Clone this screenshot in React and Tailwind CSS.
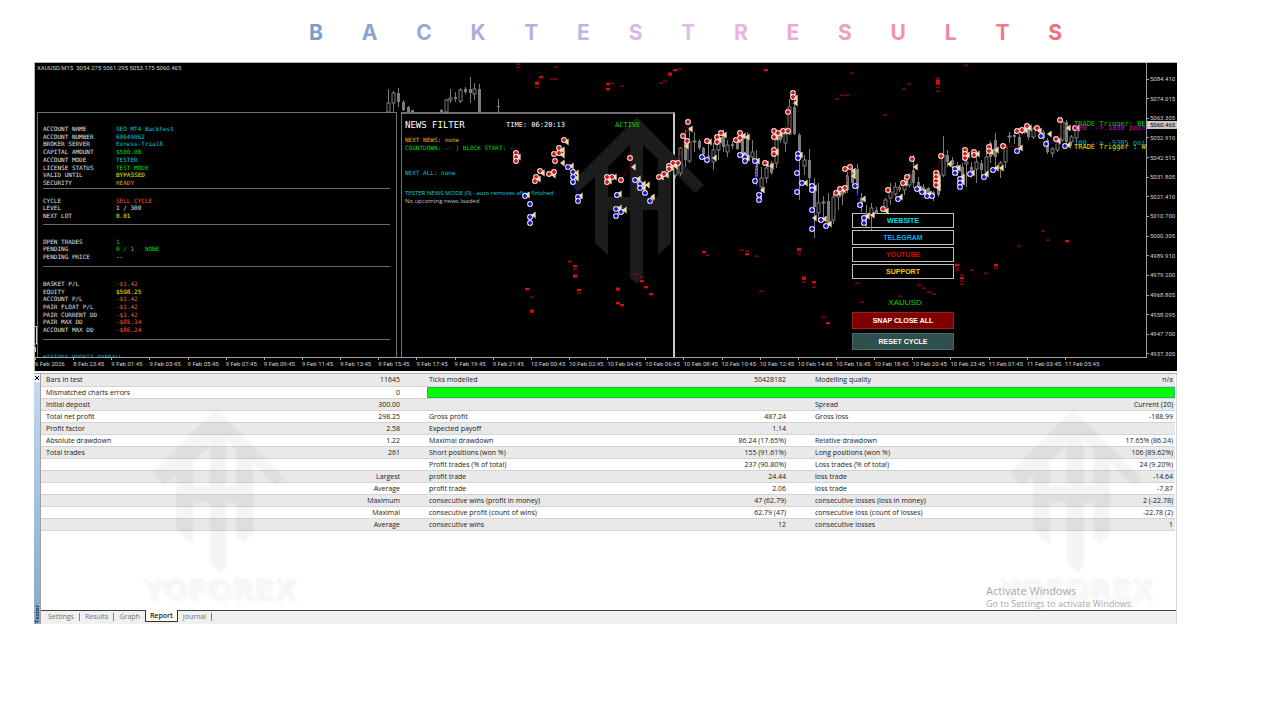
import React from "react";

const TITLE = [
  ["B", "text-[#7b9dcd]"], ["A", "text-[#8aa3d0]"], ["C", "text-[#9aa8d8]"],
  ["K", "text-[#a9aedc]"], ["T", "text-[#b5b0e0]"], ["E", "text-[#c4b4e6]"],
  ["S", "text-[#d6b7ec]"], ["T", "text-[#e3bbee]"], ["R", "text-[#e9b4e2]"],
  ["E", "text-[#eea9d3]"], ["S", "text-[#ef9fc0]"], ["U", "text-[#f092ae]"],
  ["L", "text-[#f0879f]"], ["T", "text-[#f2798d]"], ["S", "text-[#f26f80]"],
];

const PRICES = [
  "5084.410", "5074.015", "5063.305", "5052.910", "5042.515", "5031.805", "5021.410", "5010.700",
  "5000.305", "4989.910", "4979.200", "4968.805", "4958.095", "4947.700", "4937.305",
];

const TIMES = [
  "6 Feb 2026", "8 Feb 23:45", "9 Feb 01:45", "9 Feb 03:45", "9 Feb 05:45", "9 Feb 07:45", "9 Feb 09:45",
  "9 Feb 11:45", "9 Feb 13:45", "9 Feb 15:45", "9 Feb 17:45", "9 Feb 19:45", "9 Feb 21:45", "10 Feb 00:45",
  "10 Feb 02:45", "10 Feb 04:45", "10 Feb 06:45", "10 Feb 08:45", "10 Feb 10:45", "10 Feb 12:45",
  "10 Feb 14:45", "10 Feb 16:45", "10 Feb 18:45", "10 Feb 20:45", "10 Feb 23:45", "11 Feb 01:45",
  "11 Feb 03:45", "11 Feb 05:45",
];

const CYAN = "text-[#00c8d8]";
const GREEN = "text-[#00dc00]";
const YELLOW = "text-[#f0f000]";
const RED = "text-[#f05a3c]";
const WHITE = "text-[#e0e0e0]";

const ACCOUNT = [
  ["ACCOUNT NAME", "SEO MT4 Backtest", CYAN], ["ACCOUNT NUMBER", "69649962", CYAN],
  ["BROKER SERVER", "Exness-Trial8", CYAN], ["CAPITAL AMOUNT", "$500.00", GREEN],
  ["ACCOUNT MODE", "TESTER", CYAN], ["LICENSE STATUS", "TEST MODE", GREEN],
  ["VALID UNTIL", "BYPASSED", YELLOW], ["SECURITY", "READY", "text-[#e89a10]"],
];
const CYCLE = [["CYCLE", "SELL CYCLE", RED], ["LEVEL", "1 / 300", WHITE], ["NEXT LOT", "0.01", YELLOW]];
const TRADES = [["OPEN TRADES", "1", GREEN], ["PENDING", "0 / 1   NONE", GREEN], ["PENDING PRICE", "--", WHITE]];
const PROFIT = [
  ["BASKET P/L", "-$1.42", RED], ["EQUITY", "$598.25", YELLOW], ["ACCOUNT P/L", "-$1.42", RED],
  ["PAIR FLOAT P/L", "-$1.42", RED], ["PAIR CURRENT DD", "-$1.42", RED], ["PAIR MAX DD", "-$85.34", RED],
  ["ACCOUNT MAX DD", "-$86.24", RED],
];

// x, high, low, body top, body bottom, filled
const CANDLES = [
  [388, 89, 112, 103, 112, 0], [393, 91, 112, 93, 103, 0], [398, 88, 107, 93, 102, 1], [403, 100, 111, 102, 110, 1],
  [408, 106, 112, 107, 112, 1], [412, 110, 112, 110, 112, 1], [441, 109, 112, 110, 112, 1], [446, 99, 112, 100, 112, 0],
  [450, 89, 103, 98, 100, 0], [455, 92, 102, 97, 99, 1], [460, 88, 103, 90, 101, 0], [465, 87, 94, 89, 92, 1],
  [470, 77, 103, 89, 93, 1], [474, 83, 100, 89, 94, 0], [479, 84, 112, 89, 112, 1], [498, 99, 112, 106, 106, 1],
  [675, 160, 178, 163, 175, 0], [680, 147, 176, 148, 173, 0], [685, 130, 167, 142, 160, 1], [689, 127, 163, 142, 161, 0],
  [694, 132, 152, 141, 142, 0], [699, 139, 150, 141, 148, 1], [703, 147, 158, 148, 154, 1], [708, 140, 160, 156, 158, 1],
  [713, 143, 170, 150, 162, 0], [718, 135, 160, 142, 150, 0], [723, 130, 152, 135, 147, 1], [727, 140, 157, 145, 152, 0],
  [732, 141, 149, 144, 146, 1], [737, 138, 150, 142, 149, 1], [742, 132, 155, 137, 153, 1], [747, 132, 162, 138, 157, 1],
  [752, 140, 160, 152, 157, 0], [756, 150, 185, 160, 177, 1], [761, 167, 200, 178, 187, 0], [766, 163, 183, 168, 178, 0],
  [771, 161, 175, 163, 173, 1], [776, 135, 168, 140, 163, 0], [780, 130, 143, 133, 140, 1], [785, 127, 152, 134, 143, 0],
  [789, 99, 135, 107, 134, 0], [794, 92, 135, 107, 134, 1], [799, 133, 200, 135, 160, 1], [804, 155, 175, 160, 166, 0],
  [809, 149, 185, 160, 178, 1], [814, 178, 238, 187, 207, 1], [818, 183, 222, 203, 213, 0], [823, 196, 220, 202, 203, 0],
  [828, 193, 227, 201, 223, 1], [833, 195, 224, 197, 220, 0], [838, 188, 210, 190, 197, 0], [842, 186, 205, 188, 195, 1],
  [847, 172, 193, 175, 190, 1], [852, 167, 185, 170, 183, 1], [857, 164, 195, 169, 189, 1], [861, 193, 212, 198, 207, 1],
  [866, 205, 227, 213, 219, 1], [871, 203, 230, 208, 215, 0], [876, 207, 214, 210, 213, 1], [885, 198, 212, 200, 210, 0],
  [890, 183, 205, 192, 198, 0], [895, 182, 196, 187, 194, 0], [899, 185, 192, 187, 190, 1], [904, 178, 195, 185, 190, 0],
  [909, 173, 188, 175, 185, 0], [913, 155, 188, 170, 183, 1], [918, 177, 190, 182, 187, 1], [923, 184, 194, 187, 191, 1],
  [928, 187, 197, 188, 195, 1], [933, 191, 201, 192, 197, 1], [938, 170, 197, 172, 195, 1], [943, 136, 177, 155, 175, 0],
  [947, 150, 167, 155, 162, 1], [952, 157, 168, 160, 165, 1], [957, 162, 176, 165, 173, 1], [962, 163, 182, 167, 178, 1],
  [966, 157, 187, 162, 164, 0], [971, 162, 178, 167, 173, 1], [976, 153, 183, 162, 169, 0], [981, 160, 178, 163, 170, 1],
  [986, 153, 173, 157, 172, 0], [990, 141, 163, 143, 157, 1], [995, 133, 168, 140, 157, 1], [1000, 161, 178, 163, 168, 0],
  [1005, 144, 168, 147, 162, 0], [1009, 132, 143, 136, 137, 0], [1014, 132, 144, 135, 137, 1], [1019, 134, 150, 137, 147, 1],
  [1024, 127, 134, 128, 133, 1], [1028, 126, 140, 128, 137, 1], [1033, 127, 139, 129, 137, 0], [1043, 130, 140, 132, 138, 1],
  [1047, 138, 154, 140, 152, 1], [1052, 147, 157, 149, 153, 0], [1057, 140, 152, 142, 150, 0], [1062, 119, 142, 122, 140, 0],
  [1066, 120, 146, 122, 142, 1], [1071, 135, 146, 137, 142, 0], [1076, 125, 142, 128, 138, 0],
];

const SELLS = [
  [516, 153], [516, 157], [516, 161], [564, 140], [559, 148], [559, 153], [554, 154], [555, 161], [554, 172], [549, 174],
  [540, 171], [536, 177], [535, 181], [607, 177], [607, 182], [612, 177], [621, 180], [630, 158], [659, 177], [664, 174],
  [669, 166], [669, 169], [673, 163], [678, 163], [688, 122], [683, 136], [687, 141], [707, 141], [717, 137], [717, 142],
  [721, 133], [736, 140], [740, 133], [740, 138], [765, 163], [774, 131], [774, 137], [778, 133], [783, 131], [788, 131],
  [774, 150], [774, 154], [788, 112], [793, 93], [793, 97], [836, 193], [840, 189], [845, 188], [845, 169], [850, 167],
  [883, 209], [888, 190], [903, 183], [907, 177], [912, 159], [936, 173], [936, 177], [936, 181], [936, 185], [941, 156],
  [965, 150], [965, 154], [965, 158], [974, 152], [974, 155], [989, 147], [989, 151], [1003, 146], [1017, 131],
  [1022, 130], [1027, 126], [1037, 128], [1060, 120], [1056, 139], [1075, 128],
];
const BUYS = [
  [525, 196], [530, 204], [530, 217], [530, 223], [568, 167], [573, 172], [573, 177], [573, 182], [578, 197], [578, 201],
  [617, 195], [616, 209], [621, 212], [616, 216], [635, 180], [640, 184], [640, 188], [645, 193], [650, 201], [702, 157],
  [707, 160], [740, 155], [745, 157], [745, 161], [755, 161], [755, 181], [759, 195], [759, 200], [798, 154], [798, 158],
  [797, 173], [797, 192], [802, 183], [812, 186], [812, 190], [812, 210], [812, 229], [821, 220], [826, 226], [855, 186],
  [860, 205], [864, 218], [864, 223], [898, 199], [917, 189], [922, 192], [927, 196], [932, 196], [955, 169], [955, 173],
  [960, 179], [960, 183], [960, 187], [970, 174], [984, 177], [993, 170], [1017, 151], [1041, 136], [1046, 144], [1065, 146],
];
const EXITS = [
  [518, 157], [566, 142], [562, 150], [562, 155], [562, 163], [542, 173], [538, 179], [553, 175], [571, 166], [576, 173],
  [576, 178], [580, 196], [633, 167], [614, 177], [609, 181], [619, 194], [619, 208], [624, 210], [533, 215], [527, 195],
  [638, 179], [643, 184], [647, 185], [643, 188], [652, 197], [661, 177], [666, 175], [671, 168], [675, 166], [690, 129],
  [686, 146], [709, 142], [714, 158], [719, 140], [724, 135], [738, 140], [743, 136], [747, 137], [743, 155], [747, 158],
  [757, 161], [762, 190], [766, 164], [771, 166], [776, 137], [776, 152], [780, 134], [795, 98], [795, 103], [800, 155],
  [805, 183], [814, 188], [814, 218], [824, 219], [829, 224], [838, 193], [843, 190], [853, 171], [853, 176], [863, 199],
  [867, 216], [872, 215], [886, 211], [900, 197], [905, 183], [915, 167], [919, 189], [924, 192], [929, 194], [938, 178],
  [938, 183], [938, 188], [949, 164], [958, 168], [962, 177], [962, 182], [967, 155], [972, 173], [977, 154], [986, 174],
  [991, 152], [996, 150], [996, 168], [1001, 168], [1020, 148], [1020, 131], [1025, 130], [1029, 128], [1039, 131],
  [1049, 134], [1058, 141], [1068, 128], [1068, 145], [1077, 128],
];
// x, y, height
const DASHES = [
  [518, 64, 1], [518, 67, 1], [556, 67, 1], [541, 77, 2], [537, 83, 3], [537, 87, 1], [552, 79, 1], [556, 79, 1],
  [608, 84, 2], [608, 89, 2], [612, 83, 1], [622, 86, 1], [661, 83, 1], [665, 81, 1], [670, 74, 3], [675, 70, 2],
  [680, 69, 1], [766, 70, 2], [837, 99, 1], [842, 95, 1], [847, 95, 1], [852, 73, 1], [885, 115, 1], [904, 89, 1],
  [909, 84, 1], [938, 78, 1], [938, 82, 5], [938, 87, 1], [938, 91, 1], [966, 65, 1], [570, 261, 1], [570, 262, 1],
  [575, 266, 2], [575, 269, 1], [575, 276, 3], [579, 290, 2], [579, 293, 1], [527, 289, 2], [532, 297, 1], [532, 311, 3],
  [618, 289, 3], [618, 303, 2], [622, 305, 2], [637, 274, 1], [642, 277, 1], [642, 281, 2], [646, 287, 2], [651, 294, 2],
  [704, 252, 2], [708, 255, 1], [742, 250, 1], [747, 251, 1], [747, 254, 2], [757, 256, 1], [761, 291, 1], [799, 249, 2],
  [799, 251, 1], [799, 254, 1], [804, 278, 3], [804, 282, 1], [814, 282, 2], [814, 287, 1], [823, 317, 1], [828, 323, 2],
  [857, 283, 1], [862, 302, 1], [866, 316, 1], [900, 296, 1], [919, 285, 1], [924, 288, 1], [929, 292, 1], [934, 294, 1],
  [957, 265, 2], [957, 268, 1], [957, 270, 1], [962, 275, 1], [962, 278, 2], [962, 281, 1], [962, 284, 1], [972, 270, 1],
  [986, 273, 1], [996, 265, 2], [996, 268, 1], [1019, 246, 1], [1043, 231, 1], [1048, 240, 1], [1067, 241, 2],
];
const LINKS = [
  [621, 180, 633, 160, "#8c0000"], [678, 163, 688, 124, "#8c0000"], [549, 174, 559, 160, "#8c0000"],
  [788, 131, 793, 97, "#8c0000"], [883, 209, 912, 172, "#8c0000"], [936, 176, 941, 156, "#8c0000"],
  [1003, 146, 1020, 147, "#8c0000"], [1056, 139, 1066, 125, "#8c0000"], [845, 188, 850, 170, "#8c0000"],
  [573, 182, 578, 197, "#0000b4"], [755, 161, 759, 195, "#0000b4"], [797, 154, 797, 192, "#0000b4"],
  [812, 190, 812, 229, "#0000b4"], [855, 186, 860, 205, "#0000b4"], [530, 204, 530, 222, "#0000b4"],
  [645, 193, 650, 201, "#0000b4"], [1046, 144, 1062, 143, "#0000b4"],
];

const REPORT = [
  ["Bars in test", "11645", "Ticks modelled", "50428182", "Modelling quality", "n/a"],
  ["Mismatched charts errors", "0", null],
  ["Initial deposit", "300.00", "", "", "Spread", "Current (20)"],
  ["Total net profit", "298.25", "Gross profit", "487.24", "Gross loss", "-188.99"],
  ["Profit factor", "2.58", "Expected payoff", "1.14", "", ""],
  ["Absolute drawdown", "1.22", "Maximal drawdown", "86.24 (17.65%)", "Relative drawdown", "17.65% (86.24)"],
  ["Total trades", "261", "Short positions (won %)", "155 (91.61%)", "Long positions (won %)", "106 (89.62%)"],
  ["", "", "Profit trades (% of total)", "237 (90.80%)", "Loss trades (% of total)", "24 (9.20%)"],
  ["", "Largest", "profit trade", "24.44", "loss trade", "-14.64"],
  ["", "Average", "profit trade", "2.06", "loss trade", "-7.87"],
  ["", "Maximum", "consecutive wins (profit in money)", "47 (62.79)", "consecutive losses (loss in money)", "2 (-22.78)"],
  ["", "Maximal", "consecutive profit (count of wins)", "62.79 (47)", "consecutive loss (count of losses)", "-22.78 (2)"],
  ["", "Average", "consecutive wins", "12", "consecutive losses", "1"],
];

function LogoShape() {
  return (
    <>
      <path d="M67 0 L134 68 L125 76 L101 52 L101 80 H101 V93 H73 V161 L67 167 L60 161 V93 H38 V138 L25 126 V60 L8 75 L0 67 Z M60 28 L38 50 V80 H60 Z M73 28 V80 H88 V42 Z" />
      <path d="M88 80 H101 V126 L88 138 Z" />
    </>
  );
}

function Group({ rows, className }) {
  return (
    <dl className={"grid shrink-0 " + className}>
      {rows.map(([label, value, color]) => (
        <div key={label} className="flex items-center leading-none">
          <dt className="w-[73px] text-[#e0e0e0]">{label}</dt>
          <dd className={"whitespace-pre " + color}>{value}</dd>
        </div>
      ))}
    </dl>
  );
}

function AccountPanel() {
  const rule = "h-px shrink-0 border-0 bg-[#6a6a6a]";
  return (
    <section className="flex h-full w-[360px] shrink-0 flex-col overflow-hidden border-x border-t border-[#707070] bg-black pl-[5px] pr-[6px] pt-3 font-['DejaVu_Sans_Mono',monospace] text-[6px]">
      <Group rows={ACCOUNT} className="h-[62px]" />
      <hr className={rule + " mb-2 mt-px"} />
      <Group rows={CYCLE} className="h-[23px]" />
      <hr className={rule + " mb-[13px] mt-1"} />
      <Group rows={TRADES} className="h-[23px]" />
      <hr className={rule + " mb-[13px] mt-[5px]"} />
      <Group rows={PROFIT} className="h-[54px]" />
      <hr className={rule + " mb-[13px] mt-[5px]"} />
      <h2 className="shrink-0 leading-[8px] text-[#00a0d8]">HISTORY PROFIT OVERALL</h2>
    </section>
  );
}

function NewsPanel() {
  return (
    <section className="relative h-full w-[274px] shrink-0 border-l border-r-2 border-t-2 border-[#707070] border-r-[#c8c8c8] bg-black pl-[3px] pt-[5px] font-['DejaVu_Sans_Mono',monospace] text-[6px] leading-[8px]">
      <svg className="absolute left-[168px] top-[3px] h-[167px] w-[134px]" viewBox="0 0 134 167" fill="#1c1c1c" aria-hidden="true">
        <LogoShape />
      </svg>
      <div className="relative flex h-3 items-center">
        <h2 className="w-[101px] text-[9px] text-white">NEWS FILTER</h2>
        <p className="w-[109px] text-[7px] text-white">TIME: 06:20:13</p>
        <p className="text-[7px] text-[#00dc00]">ACTIVE</p>
      </div>
      <div className="relative">
        <p className="mt-[5px] text-[#e8b800]">NEXT NEWS: none</p>
        <p className="text-[#00dc00]">COUNTDOWN: -- | BLOCK START: --</p>
        <p className="mt-[17px] text-[#00c8c8]">NEXT ALL: none</p>
      </div>
      <div className="relative mt-3 font-['Open_Sans',sans-serif] text-[6px]">
        <p className="text-[#00d0d8]">TESTER NEWS MODE (0) - auto removes after finished</p>
        <p className="text-[#c0c0c0]">No upcoming news loaded</p>
      </div>
    </section>
  );
}

function ActionButtons() {
  const link = "flex h-[15px] items-center justify-center border border-[#c0c0c0] bg-black ";
  const action = "flex h-[17px] items-center justify-center border text-white ";
  return (
    <div className="mr-48 flex w-[102px] shrink-0 flex-col gap-0.5 pt-[101px] font-['Liberation_Sans',sans-serif] text-[7px] font-bold leading-none">
      <button type="button" className={link + "text-[#00e0e0]"}>WEBSITE</button>
      <button type="button" className={link + "text-[#00a8f0]"}>TELEGRAM</button>
      <button type="button" className={link + "text-[#d80000]"}>YOUTUBE</button>
      <button type="button" className={link + "text-[#f0d000]"}>SUPPORT</button>
      <p className="pb-[3px] pl-1 pt-[18px] text-center text-[8px] font-normal text-[#00d800]">XAUUSD</p>
      <button type="button" className={action + "border-[#9c2020] bg-[#800000]"}>SNAP CLOSE ALL</button>
      <button type="button" className={action + "mt-0.5 border-[#4a6a6a] bg-[#2f4f4f]"}>RESET CYCLE</button>
    </div>
  );
}

function Marker({ x, y, color }) {
  return (
    <g>
      <circle cx={x} cy={y} r="2.9" fill="#f4f0f0" />
      <path d={`M${x} ${y - 2.4} L${x + 2.4} ${y} L${x} ${y + 2.4} L${x - 2.4} ${y} Z`} fill={color} />
    </g>
  );
}

function PriceChart() {
  return (
    <svg className="pointer-events-none absolute inset-0 h-full w-full" viewBox="35 63 1112 294" preserveAspectRatio="xMinYMin slice" aria-label="XAUUSD candles and trades" role="img">
      {CANDLES.map(([x, hi, lo, top, bottom, filled], i) => (
        <g key={i}>
          <rect x={x} y={hi} width="1" height={lo - hi} fill="#7a7a7a" />
          <rect x={x - 1} y={top} width="3" height={Math.max(1, bottom - top)} fill={filled ? "#7c7c7c" : "#000"} stroke={filled ? "none" : "#989898"} strokeWidth="0.8" />
        </g>
      ))}
      {LINKS.map(([x1, y1, x2, y2, c], i) => (
        <line key={i} x1={x1} y1={y1} x2={x2} y2={y2} stroke={c} strokeDasharray="2 1" />
      ))}
      {DASHES.map(([x, y, h], i) => (
        <rect key={i} x={x - 2} y={y - h / 2} width="4" height={h + 0.3} fill={h > 1 ? "#d80c0c" : "#960808"} />
      ))}
      {EXITS.map(([x, y], i) => (
        <path key={i} d={`M${x + 2.6} ${y - 3.6} V${y + 3.6} L${x - 2} ${y} Z`} fill="#f4d8a4" />
      ))}
      {SELLS.map(([x, y], i) => <Marker key={i} x={x} y={y} color="#dc1414" />)}
      {BUYS.map(([x, y], i) => <Marker key={i} x={x} y={y} color="#1616d8" />)}
      <path d="M35 326.5 H36.5 V344 H35 M35.5 347 V352" stroke="#d0d0d0" fill="none" />
    </svg>
  );
}

function ChartWindow() {
  const note = "absolute left-0 whitespace-nowrap ";
  return (
    <section className="border-l border-t border-[#b8b8b8] bg-black font-['Roboto',sans-serif] text-[6px] leading-[8px] text-[#d0d0d0]">
      <div className="flex">
        <div className="relative flex h-[295px] min-w-0 flex-1 flex-col overflow-hidden border-b border-r border-[#a0a0a0]">
          <p className="h-[49px] shrink-0 pl-0.5 pt-px">XAUUSD.M15&nbsp; 5054.275 5061.295 5053.175 5060.465</p>
          <div className="flex min-h-0 flex-1 gap-1 pl-0.5">
            <AccountPanel />
            <NewsPanel />
            <div className="flex-1" />
            <ActionButtons />
          </div>
          <PriceChart />
          <div className="absolute right-0 top-[57px] h-8 w-[72px] overflow-hidden font-['DejaVu_Sans_Mono',monospace] text-[7px]">
            <p className={note + "top-0 text-[#00c800]"}>TRADE Trigger: BE</p>
            <p className={note + "top-1 text-[#d000d0]"}>100 --&gt; 1210 poin</p>
            <p className={note + "top-[19px] text-[#00a8b8]"}>100 --&gt; -9305 poi</p>
            <p className={note + "top-[23px] text-[#e0e000]"}>TRADE Trigger : W</p>
          </div>
        </div>
        <div className="relative flex h-[295px] w-[30px] shrink-0 flex-col justify-between pt-3">
          {PRICES.map((p) => (
            <div key={p} className="flex h-2 items-center gap-px">
              <span className="h-px w-0.5 bg-[#a0a0a0]" />
              {p}
            </div>
          ))}
          <span className="absolute inset-x-0 top-[58px] h-[8px] bg-[#c8c8c8] pl-[3px] text-black">5060.465</span>
        </div>
      </div>
      <div className="grid h-[13px] grid-cols-[repeat(28,minmax(0,1fr))] pr-[74px]">
        {TIMES.map((t) => (
          <div key={t} className="whitespace-nowrap">
            <span className="block h-0.5 w-px bg-[#a0a0a0]" />
            {t}
          </div>
        ))}
      </div>
    </section>
  );
}

function Watermark({ side }) {
  return (
    <div className={"pointer-events-none absolute top-[35px] flex w-[166px] flex-col items-center " + side} aria-hidden="true">
      <svg className="h-[164px] w-[134px] opacity-[0.04] blur-[1px]" viewBox="0 0 140 172" fill="#000">
        <g transform="translate(5 5)"><LogoShape /></g>
        <LogoShape />
      </svg>
      <span className="font-['DejaVu_Sans',sans-serif] text-[29px] font-bold leading-8 text-black opacity-[0.03] blur-[1px] [text-shadow:3px_3px_0_#000]">YOFOREX</span>
    </div>
  );
}

function TesterReport() {
  const label = "p-0 pl-[5px] text-left font-normal";
  const value = "p-0 text-right";
  return (
    <table className="w-full table-fixed border-collapse">
      <colgroup>
        <col className="w-[17%]" />
        <col />
        <col className="w-[17%]" />
        <col />
        <col className="w-[17%]" />
        <col />
      </colgroup>
      <tbody>
        {REPORT.map((r, i) => (
          <tr key={i} className={"h-3 border-b border-[#d4d4d4] " + (i % 2 ? "bg-white" : "bg-[#e9e9e9]")}>
            <th scope="row" className={label}>{r[0]}</th>
            <td className={value + " pr-[19px]"}>{r[1]}</td>
            {r[2] === null ? (
              <td colSpan={4} className="p-0 pl-2">
                <div className="h-[11px] border border-[#30b060] bg-[#00ff00]" role="img" aria-label="Modelling quality bar" />
              </td>
            ) : (
              <>
                <td className="p-0 pl-[10px]">{r[2]}</td>
                <td className={value + " pr-[11px]"}>{r[3]}</td>
                <td className="p-0 pl-[18px]">{r[4]}</td>
                <td className={value + " pr-0.5"}>{r[5]}</td>
              </>
            )}
          </tr>
        ))}
      </tbody>
    </table>
  );
}

function TesterWindow() {
  const tab = "px-[5px] text-[#707070]";
  const bar = <span className="h-2 w-px bg-[#808080]" />;
  return (
    <section className="flex h-[250px] font-['Open_Sans',sans-serif] text-[7px] leading-[11px] text-[#202020]">
      <div className="flex w-[7px] shrink-0 flex-col border-r border-[#a0a0a0] bg-[#f0f0f0]">
        <button type="button" aria-label="Close" className="flex h-2 items-center justify-center">
          <svg className="h-1 w-1" viewBox="0 0 4 4" stroke="#000" aria-hidden="true"><path d="M0 0 L4 4 M4 0 L0 4" /></svg>
        </button>
        <div className="flex flex-1 items-end bg-linear-to-b from-[#c4d8f0] to-[#84a8d0]">
          <span className="w-[6px] rotate-180 pt-px text-[6px] font-semibold leading-[6px] [writing-mode:vertical-rl]">Tester</span>
        </div>
      </div>
      <div className="flex min-w-0 flex-1 flex-col border-r border-[#d8d8d8]">
        <div className="relative flex-1 bg-white pr-px">
          <TesterReport />
          <Watermark side="left-[95px]" />
          <Watermark side="right-[17px]" />
          <div className="absolute bottom-0 right-[49px] w-[141px] whitespace-nowrap text-[#a8a8a8]">
            <p className="text-[11px] leading-[15px]">Activate Windows</p>
            <p className="text-[9px] leading-[12px]">Go to Settings to activate Windows.</p>
          </div>
        </div>
        <nav className="flex h-[14px] items-center border-t border-[#404040] bg-[#f0f0f0] pb-0.5 pl-0.5">
          <button type="button" className={tab}>Settings</button>
          {bar}
          <button type="button" className={tab}>Results</button>
          {bar}
          <button type="button" className={tab}>Graph</button>
          <button type="button" className="-mt-0.5 h-[13px] border-x border-b border-[#303030] bg-white px-1 font-semibold text-[#202020]">Report</button>
          <button type="button" className={tab}>Journal</button>
          {bar}
        </nav>
      </div>
    </section>
  );
}

export default function App() {
  return (
    <main className="min-h-screen bg-white">
      <h1 className="flex h-[62px] items-center justify-between pl-[309px] pr-[218px] pt-[3px] font-['Inter',sans-serif] text-[21px] font-bold leading-none">
        {TITLE.map(([letter, color], i) => (
          <span key={i} className={color}>{letter}</span>
        ))}
      </h1>
      <div className="ml-[34px] mr-[103px]">
        <ChartWindow />
        <div className="h-[3px] border-b border-[#b0b0b0] bg-[#f4f4f4]" />
        <TesterWindow />
      </div>
    </main>
  );
}
